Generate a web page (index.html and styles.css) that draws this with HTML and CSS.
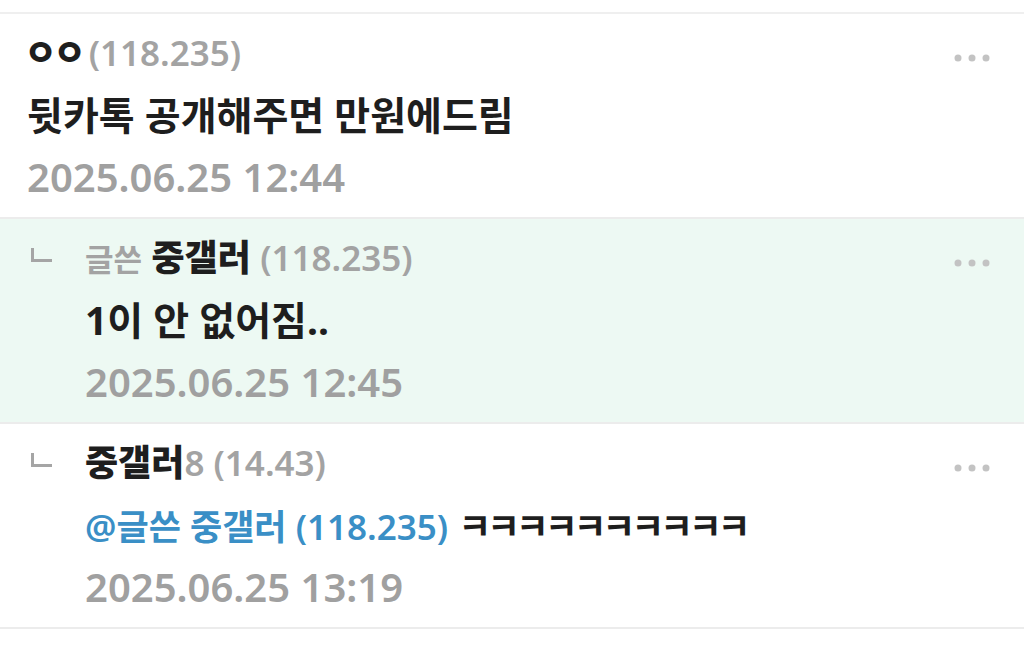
FILE: index.html
```html
<!DOCTYPE html>
<html lang="ko">
<head>
    <meta charset="UTF-8">
    <meta name="viewport" content="width=device-width, initial-scale=1.0">
    <title>댓글</title>
    <link rel="stylesheet" href="styles.css">
</head>
<body>
    <ul class="comment-list">
        <li class="comment">
            <div class="body">
                <div class="writer">
                    <span class="nick jamo">ㅇㅇ</span> <span class="ip">(118.235)</span>
                </div>
                <p class="text">뒷카톡 공개해주면 만원에드림</p>
                <div class="date">2025.06.25 12:44</div>
            </div>
            <button class="more" type="button" aria-label="더보기">
                <svg width="36" height="8" viewBox="0 0 36 8"><circle cx="4" cy="4" r="3.5"/><circle cx="18" cy="4" r="3.5"/><circle cx="32" cy="4" r="3.5"/></svg>
            </button>
        </li>
        <li class="comment reply author">
            <span class="reply-mark"></span>
            <div class="body">
                <div class="writer">
                    <span class="badge">글쓴</span> <span class="nick">중갤러</span> <span class="ip">(118.235)</span>
                </div>
                <p class="text">1이 안 없어짐..</p>
                <div class="date">2025.06.25 12:45</div>
            </div>
            <button class="more" type="button" aria-label="더보기">
                <svg width="36" height="8" viewBox="0 0 36 8"><circle cx="4" cy="4" r="3.5"/><circle cx="18" cy="4" r="3.5"/><circle cx="32" cy="4" r="3.5"/></svg>
            </button>
        </li>
        <li class="comment reply">
            <span class="reply-mark"></span>
            <div class="body">
                <div class="writer">
                    <span class="nick">중갤러</span><span class="ip">8 (14.43)</span>
                </div>
                <p class="text"><span class="mention">@글쓴 중갤러 (118.235)</span> <span class="kk">ㅋㅋㅋㅋㅋㅋㅋㅋㅋㅋ</span></p>
                <div class="date">2025.06.25 13:19</div>
            </div>
            <button class="more" type="button" aria-label="더보기">
                <svg width="36" height="8" viewBox="0 0 36 8"><circle cx="4" cy="4" r="3.5"/><circle cx="18" cy="4" r="3.5"/><circle cx="32" cy="4" r="3.5"/></svg>
            </button>
        </li>
    </ul>
</body>
</html>
```

FILE: styles.css
```css
* {
    margin: 0;
    padding: 0;
    box-sizing: border-box;
}

body {
    font-family: "Noto Sans", "Noto Sans CJK KR", sans-serif;
    background-color: #fff;
    color: #1e1e1e;
}

.comment-list {
    list-style: none;
    margin-top: 12px;
    border-top: 2px solid #efefef;
}

.comment {
    display: flex;
    align-items: flex-start;
    height: 205px;
    padding: 8px 34px 8px 27px;
    border-bottom: 2px solid #ececec;
}

.reply {
    padding-left: 31px;
}

.author {
    background-color: #edf9f3;
}

.reply-mark {
    flex: none;
    width: 21px;
    height: 14px;
    margin: 21px 33px 0 0;
    border-left: 3px solid #a5a5a5;
    border-bottom: 3px solid #a5a5a5;
}

.body {
    flex: 1;
}

.writer {
    height: 62px;
    line-height: 62px;
    font-size: 36px;
    font-weight: 700;
}

.nick {
    font-weight: 900;
}

.jamo {
    margin-left: -3px;
    margin-right: -3px;
    letter-spacing: -4px;
}

.ip,
.badge {
    color: #a3a3a3;
    font-weight: 600;
}

.ip {
    font-size: 35px;
}

.badge {
    font-size: 31px;
    font-weight: 700;
}

.text {
    height: 62px;
    line-height: 62px;
    font-size: 39px;
    font-weight: 700;
    white-space: nowrap;
}

.mention {
    color: #3a8fc6;
    font-size: 35px;
    font-weight: 600;
}

.kk {
    font-size: 36px;
    letter-spacing: -4.3px;
}

.date {
    height: 62px;
    line-height: 62px;
    font-size: 40px;
    font-weight: 600;
    color: #a0a0a0;
}

.more {
    flex: none;
    margin-top: 32px;
    border: none;
    background: none;
    fill: #c3c3c3;
    cursor: pointer;
}

.more svg {
    display: block;
}
```
